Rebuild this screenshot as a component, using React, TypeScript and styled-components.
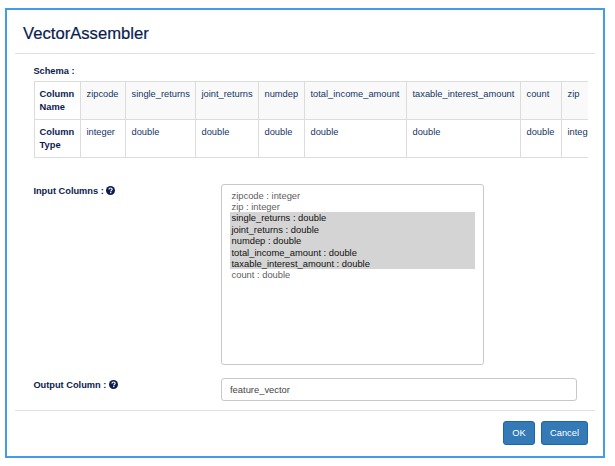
import React from "react";
import styled, { createGlobalStyle } from "styled-components";

const GlobalStyle = createGlobalStyle`
  *, *::before, *::after { box-sizing: border-box; }
  body {
    margin: 0;
    background: #fff;
    color: #143566;
    font-family: "Liberation Sans", Arial, sans-serif;
    font-size: 9.3px;
  }
`;

const Dialog = styled.main`
  width: 600px;
  height: 450px;
  margin: 8px 0 0 5px;
  padding: 0 8px;
  border: 2px solid #429ce9;
  display: flex;
  flex-direction: column;
`;

const Header = styled.header`
  height: 44px;
  flex: none;
  padding: 13px 8px 0;
  border-bottom: 1px solid #e2e2e2;
`;

const Title = styled.h1`
  margin: 0;
  font-size: 16.65px;
  line-height: 22px;
  font-weight: 400;
  color: #0b1c50;
  -webkit-text-stroke: 0.2px #0b1c50;
`;

const Body = styled.section`
  flex: 1;
  min-height: 0;
  padding: 11px 7px 0 18px;
`;

const Label = styled.span`
  display: flex;
  align-items: center;
  gap: 2.4px;
  height: 13px;
  line-height: 13px;
  padding-left: 0.4px;
  font-size: 9.25px;
  font-weight: 700;
  color: #0b1c50;
  white-space: pre;
`;

const TableClip = styled.div`
  width: 555px;
  margin: 3px 0 26px;
  overflow: hidden;
`;

const Table = styled.table`
  width: 573px;
  margin-left: 1px;
  table-layout: fixed;
  border-collapse: separate;
  border-spacing: 0;
  border-top: 1px solid #dcdcdc;
  border-left: 1px solid #dcdcdc;
`;

const Col = styled.col<{ $width: number }>`
  width: ${(p) => p.$width}px;
`;

const Row = styled.tr<{ $striped?: boolean }>`
  height: 38px;
  background: ${(p) => (p.$striped ? "#f9f9f9" : "#fff")};
`;

const cellBox = `
  padding: 6px 0 0 5.5px;
  text-align: left;
  vertical-align: top;
  line-height: 13px;
  border-right: 1px solid #dcdcdc;
  border-bottom: 1px solid #dcdcdc;
`;

const HeadCell = styled.th`
  ${cellBox}
  padding-left: 4.6px;
  background: #fff;
  color: #0b1c50;
`;

const Cell = styled.td`
  ${cellBox}
  white-space: nowrap;
`;

const Field = styled.div`
  display: grid;
  grid-template-columns: 188px 1fr;
  align-items: start;
  margin-bottom: 13px;
`;

const FieldLabel = styled(Label)`
  margin-top: 1px;
`;

const OptionList = styled.ul`
  width: 263px;
  height: 181px;
  margin: 0;
  padding: 4.6px 8px;
  list-style: none;
  border: 1px solid #c8c8c8;
  border-radius: 3px;
`;

const Option = styled.li<{ $selected: boolean }>`
  height: 11.4px;
  line-height: 12px;
  padding-left: 1.5px;
  font-size: 9.37px;
  color: ${(p) => (p.$selected ? "#111" : "#606060")};
  background: ${(p) => (p.$selected ? "#d4d4d4" : "transparent")};
`;

const TextInput = styled.input`
  width: 356px;
  height: 23px;
  padding: 0 8px;
  border: 1px solid #c8c8c8;
  border-radius: 3px;
  outline: none;
  background: #fff;
  color: #444;
  font: inherit;
  font-size: 9.4px;
`;

const Footer = styled.footer`
  height: 46px;
  flex: none;
  display: flex;
  justify-content: flex-end;
  gap: 6px;
  padding: 10px 7px 0 0;
  border-top: 1px solid #e2e2e2;
`;

const Button = styled.button<{ $width: number }>`
  width: ${(p) => p.$width}px;
  height: 24px;
  padding: 0;
  border: 1px solid #1f66a8;
  border-radius: 3px;
  background: #337ab7;
  color: #fff;
  font: inherit;
`;

const HelpSvg = styled.svg`
  width: 9px;
  height: 9px;
  margin-top: -2px;
`;

const HelpIcon = () => (
  <HelpSvg viewBox="0 0 18 18" aria-hidden="true">
    <circle cx="9" cy="9" r="9" fill="#0b1c50" />
    <path
      d="M5.8 6.9C5.9 4.9 7.2 4 9.1 4c1.8 0 3.2 1 3.2 2.7 0 2.2-2.8 2.2-2.8 4.1"
      fill="none"
      stroke="#fff"
      strokeWidth="2.3"
    />
    <rect x="8.2" y="12" width="2.5" height="2.4" fill="#fff" />
  </HelpSvg>
);

const columns = [
  { name: "zipcode", type: "integer", width: 45 },
  { name: "single_returns", type: "double", width: 70 },
  { name: "joint_returns", type: "double", width: 63 },
  { name: "numdep", type: "double", width: 46 },
  { name: "total_income_amount", type: "double", width: 102 },
  { name: "taxable_interest_amount", type: "double", width: 114 },
  { name: "count", type: "double", width: 41 },
  { name: "zip", type: "integer", width: 45 },
];

const options = [
  { text: "zipcode : integer", selected: false },
  { text: "zip : integer", selected: false },
  { text: "single_returns : double", selected: true },
  { text: "joint_returns : double", selected: true },
  { text: "numdep : double", selected: true },
  { text: "total_income_amount : double", selected: true },
  { text: "taxable_interest_amount : double", selected: true },
  { text: "count : double", selected: false },
];

export default function App() {
  return (
    <>
      <GlobalStyle />
      <Dialog>
        <Header>
          <Title>VectorAssembler</Title>
        </Header>
        <Body>
          <Label>Schema :</Label>
          <TableClip>
            <Table>
              <colgroup>
                <Col $width={46} />
                {columns.map((c) => (
                  <Col key={c.name} $width={c.width} />
                ))}
              </colgroup>
              <tbody>
                <Row $striped>
                  <HeadCell>Column Name</HeadCell>
                  {columns.map((c) => (
                    <Cell key={c.name}>{c.name}</Cell>
                  ))}
                </Row>
                <Row>
                  <HeadCell>Column Type</HeadCell>
                  {columns.map((c) => (
                    <Cell key={c.name}>{c.type}</Cell>
                  ))}
                </Row>
              </tbody>
            </Table>
          </TableClip>
          <Field>
            <FieldLabel>
              Input Columns :<HelpIcon />
            </FieldLabel>
            <OptionList>
              {options.map((o) => (
                <Option key={o.text} $selected={o.selected}>
                  {o.text}
                </Option>
              ))}
            </OptionList>
          </Field>
          <Field>
            <FieldLabel>
              Output Column :<HelpIcon />
            </FieldLabel>
            <TextInput defaultValue="feature_vector" />
          </Field>
        </Body>
        <Footer>
          <Button $width={32}>OK</Button>
          <Button $width={47}>Cancel</Button>
        </Footer>
      </Dialog>
    </>
  );
}
